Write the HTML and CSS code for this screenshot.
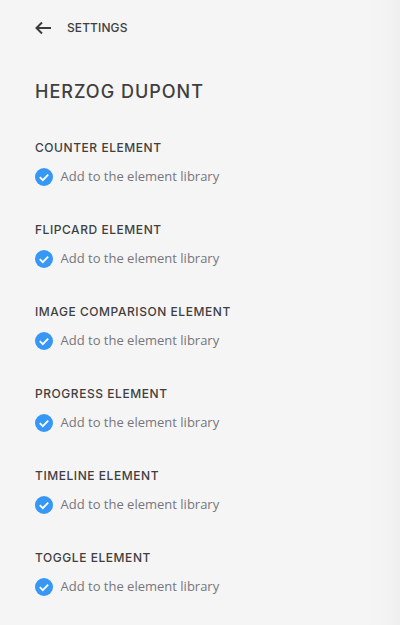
FILE: index.html
```html
<!DOCTYPE html>
<html lang="en">
<head>
    <meta charset="UTF-8">
    <title>Settings</title>
    <link rel="stylesheet" href="styles.css">
</head>
<body>
    <div class="panel">
        <div class="topbar">
            <svg class="back-icon" width="18" height="16" viewBox="0 0 18 16" fill="none" stroke="#3c3c3c" stroke-width="2">
                <path d="M16 9H1.5"/>
                <path d="M7 3.5L1.5 9l5.5 5.5"/>
            </svg>
            <span class="topbar-title">SETTINGS</span>
        </div>

        <h1 class="title">HERZOG DUPONT</h1>

        <div class="element">
            <div class="element-name">COUNTER ELEMENT</div>
            <label class="check-row">
                <svg class="check-icon" width="18" height="20" viewBox="0 0 18 20"><circle cx="9" cy="11" r="9" fill="#3797f5"/><path d="M4.8 11.2l3 3 5.4-5.6" fill="none" stroke="#fff" stroke-width="1.8"/></svg>
                <span>Add to the element library</span>
            </label>
        </div>
        <div class="element">
            <div class="element-name">FLIPCARD ELEMENT</div>
            <label class="check-row">
                <svg class="check-icon" width="18" height="20" viewBox="0 0 18 20"><circle cx="9" cy="11" r="9" fill="#3797f5"/><path d="M4.8 11.2l3 3 5.4-5.6" fill="none" stroke="#fff" stroke-width="1.8"/></svg>
                <span>Add to the element library</span>
            </label>
        </div>
        <div class="element">
            <div class="element-name">IMAGE COMPARISON ELEMENT</div>
            <label class="check-row">
                <svg class="check-icon" width="18" height="20" viewBox="0 0 18 20"><circle cx="9" cy="11" r="9" fill="#3797f5"/><path d="M4.8 11.2l3 3 5.4-5.6" fill="none" stroke="#fff" stroke-width="1.8"/></svg>
                <span>Add to the element library</span>
            </label>
        </div>
        <div class="element">
            <div class="element-name">PROGRESS ELEMENT</div>
            <label class="check-row">
                <svg class="check-icon" width="18" height="20" viewBox="0 0 18 20"><circle cx="9" cy="11" r="9" fill="#3797f5"/><path d="M4.8 11.2l3 3 5.4-5.6" fill="none" stroke="#fff" stroke-width="1.8"/></svg>
                <span>Add to the element library</span>
            </label>
        </div>
        <div class="element">
            <div class="element-name">TIMELINE ELEMENT</div>
            <label class="check-row">
                <svg class="check-icon" width="18" height="20" viewBox="0 0 18 20"><circle cx="9" cy="11" r="9" fill="#3797f5"/><path d="M4.8 11.2l3 3 5.4-5.6" fill="none" stroke="#fff" stroke-width="1.8"/></svg>
                <span>Add to the element library</span>
            </label>
        </div>
        <div class="element">
            <div class="element-name">TOGGLE ELEMENT</div>
            <label class="check-row">
                <svg class="check-icon" width="18" height="20" viewBox="0 0 18 20"><circle cx="9" cy="11" r="9" fill="#3797f5"/><path d="M4.8 11.2l3 3 5.4-5.6" fill="none" stroke="#fff" stroke-width="1.8"/></svg>
                <span>Add to the element library</span>
            </label>
        </div>
    </div>
</body>
</html>
```

FILE: styles.css
```css
* {
    margin: 0;
    padding: 0;
    box-sizing: border-box;
}

html, body {
    height: 100%;
    overflow: hidden;
}

body {
    font-family: "Open Sans", sans-serif;
    background: #f5f5f5;
    color: #3f3f3f;
}

.panel {
    height: 100%;
    padding: 17px 35px 0;
    background: linear-gradient(to right, #f5f5f5 370px, #f3f3f3 385px, #efefef 400px);
}

.topbar {
    display: flex;
    align-items: center;
    height: 20px;
}

.back-icon {
    margin-right: 14px;
}

.topbar-title {
    font-family: Inter, sans-serif;
    font-size: 12px;
    font-weight: 500;
    letter-spacing: 0.1px;
}

.title {
    font-family: Inter, sans-serif;
    font-size: 18px;
    font-weight: 500;
    line-height: 24px;
    letter-spacing: 1px;
    margin-top: 43px;
    margin-bottom: 35px;
}

.element {
    height: 82px;
}

.element-name {
    font-family: Inter, sans-serif;
    font-size: 12px;
    font-weight: 500;
    line-height: 18px;
    letter-spacing: 0.55px;
    margin-bottom: 9px;
}

.check-row {
    display: flex;
    align-items: center;
    gap: 7.5px;
    font-size: 13px;
    line-height: 18px;
    color: #77767c;
}
```
